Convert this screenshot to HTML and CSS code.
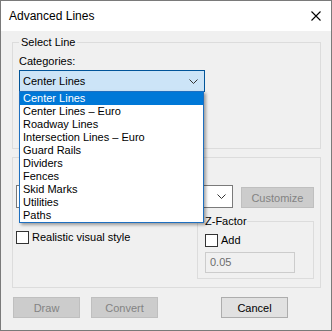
FILE: index.html
```html
<!DOCTYPE html>
<html lang="en">
<head>
    <meta charset="UTF-8">
    <title>Advanced Lines</title>
    <link rel="stylesheet" href="styles.css">
</head>
<body>
    <div class="window">
        <div class="titlebar">
            <span class="title">Advanced Lines</span>
            <svg class="close" width="10" height="10" viewBox="0 0 10 10">
                <path d="M0.5 0.5 L9.5 9.5 M9.5 0.5 L0.5 9.5" stroke="#000" stroke-width="1.1" fill="none"/>
            </svg>
        </div>

        <div class="content">
            <fieldset class="group group-select">
                <legend>Select Line</legend>
                <div class="label">Categories:</div>
                <div class="combo combo-open">
                    <span>Center Lines</span>
                    <svg width="9" height="5" viewBox="0 0 9 5"><path d="M0.5 0.5 L4.5 4.5 L8.5 0.5" stroke="#333" fill="none"/></svg>
                </div>
            </fieldset>

            <!-- its title sits under the open list -->
            <fieldset class="group group-style">
                <div class="style-row">
                    <div class="combo combo-style">
                        <span></span>
                        <svg width="9" height="5" viewBox="0 0 9 5"><path d="M0.5 0.5 L4.5 4.5 L8.5 0.5" stroke="#333" fill="none"/></svg>
                    </div>
                    <button class="btn btn-disabled btn-customize" disabled>Customize</button>
                </div>
                <div class="options-row">
                    <label class="check check-realistic"><span class="box"></span>Realistic visual style</label>
                    <fieldset class="group group-z">
                        <legend>Z-Factor</legend>
                        <label class="check"><span class="box"></span>Add</label>
                        <div class="input-disabled">0.05</div>
                    </fieldset>
                </div>
            </fieldset>

            <div class="buttons">
                <button class="btn btn-disabled" disabled>Draw</button>
                <button class="btn btn-disabled" disabled>Convert</button>
                <button class="btn btn-cancel">Cancel</button>
            </div>
        </div>

        <!-- open list of the categories combo -->
        <ul class="dropdown">
            <li class="selected">Center Lines</li>
            <li>Center Lines – Euro</li>
            <li>Roadway Lines</li>
            <li>Intersection Lines – Euro</li>
            <li>Guard Rails</li>
            <li>Dividers</li>
            <li>Fences</li>
            <li>Skid Marks</li>
            <li>Utilities</li>
            <li>Paths</li>
        </ul>
    </div>
</body>
</html>
```

FILE: styles.css
```css
body {
    margin: 0;
    font-family: 'Liberation Sans', Arial, sans-serif;
    font-size: 11px;
    color: #000;
}

.window {
    position: relative;
    width: 332px;
    height: 331px;
    box-sizing: border-box;
    border: 1px solid #7a7a7a;
    background-color: #f0f0f0;
    overflow: hidden;
}

.titlebar {
    height: 30px;
    background-color: #fff;
    display: flex;
    align-items: center;
    justify-content: space-between;
    padding: 0 10px 0 8px;
}

.title {
    font-size: 12px;
}

.content {
    padding: 4px 10px 0 11px;
}

/* group boxes */
.group {
    margin: 0;
    border: 1px solid #dcdcdc;
    padding: 0 6px 0 6px;
    min-width: 0;
}

.group legend {
    padding: 0 2px;
    line-height: 14px;
}

.group-select {
    height: 114px;
    box-sizing: border-box;
}

.label {
    line-height: 14px;
    margin-top: 5px;
}

.combo {
    box-sizing: border-box;
    height: 22px;
    display: flex;
    align-items: center;
    justify-content: space-between;
    padding: 0 6px 0 3px;
    border: 1px solid #7a7a7a;
    background-color: #fff;
}

.combo-open {
    margin-top: 2px;
    width: 186px;
    background-color: #cce4f7;
    border-color: #005499;
}

.group-style {
    margin-top: 8px;
    height: 131px;
    box-sizing: border-box;
    padding: 0 6px 0 3px;
}

.style-row {
    display: flex;
    align-items: flex-start;
    margin-top: 27px;
}

.combo-style {
    width: 219px;
    height: 23px;
}

.btn {
    font-family: 'Liberation Sans', Arial, sans-serif;
    font-size: 11px;
    box-sizing: border-box;
    height: 21px;
    width: 67px;
    padding: 0;
}

.btn-disabled {
    background-color: #cccccc;
    border: 1px solid #bfbfbf;
    color: #838383;
}

.btn-customize {
    margin-left: 8px;
    margin-top: 2px;
    width: 74px;
}

.btn-cancel {
    background-color: #e1e1e1;
    border: 1px solid #adadad;
    color: #000;
    margin-left: 52px;
}

.options-row {
    display: flex;
    justify-content: space-between;
    margin-top: 6px;
}

.check {
    display: flex;
    align-items: center;
    line-height: 14px;
}

.check .box {
    width: 13px;
    height: 13px;
    box-sizing: border-box;
    border: 1px solid #333;
    background-color: #fff;
    margin-right: 3px;
}

.check-realistic {
    margin-top: 16px;
    align-self: flex-start;
}

.group-z {
    width: 117px;
    height: 65px;
    box-sizing: border-box;
    padding: 0 6px 0 7px;
}

.group-z legend {
    padding: 0;
}

.group-z .check {
    margin-top: 5px;
}

.input-disabled {
    box-sizing: border-box;
    width: 90px;
    height: 21px;
    margin-top: 5px;
    border: 1px solid #cccccc;
    background-color: #f0f0f0;
    color: #6d6d6d;
    line-height: 19px;
    padding-left: 4px;
}

.buttons {
    display: flex;
    gap: 11px;
    margin-top: 9px;
    padding-left: 1px;
}

/* the opened list floats over the dialog */
.dropdown {
    position: absolute;
    left: 18px;
    top: 90px;
    width: 185px;
    height: 132px;
    box-sizing: border-box;
    margin: 0;
    padding: 0;
    list-style: none;
    background-color: #fff;
    border: 1px solid #1e6fc0;
    box-shadow: 2px 2px 3px rgba(0, 0, 0, 0.35);
}

.dropdown li {
    height: 13px;
    line-height: 13px;
    padding-left: 3px;
}

.dropdown .selected {
    background-color: #0078d7;
    color: #fff;
}
```
